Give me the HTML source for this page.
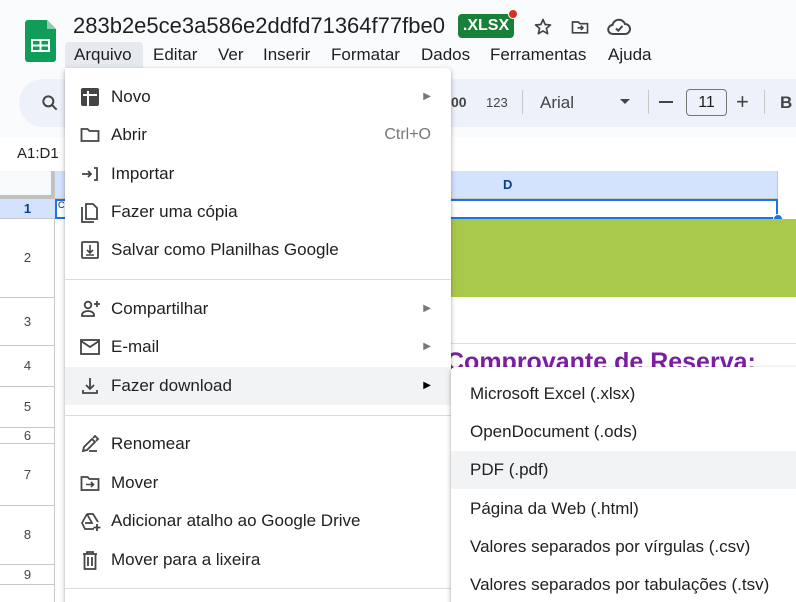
<!DOCTYPE html><html><head><meta charset="utf-8"><style>
*{box-sizing:border-box;margin:0;padding:0}
html,body{width:796px;height:602px;overflow:hidden}
body{position:relative;background:#f9fbfd;font-family:"Liberation Sans",Arial,sans-serif;color:#1f1f1f}
.abs{position:absolute}
.menu{position:absolute;background:#fff;box-shadow:0 2px 6px rgba(0,0,0,.25),0 1px 2px rgba(0,0,0,.15);border-radius:4px}
.it{position:absolute;left:0;right:0;height:38px;font-size:17px;line-height:38px;color:#202124}
.it .t{position:absolute;left:46px}
.it svg{position:absolute;left:15px;top:9px}
.arr{position:absolute;right:20px;top:0;font-size:10px;color:#777}
.div{position:absolute;left:0;right:0;height:1px;background:#dadce0}
.rh{position:absolute;left:0;width:55px;border-bottom:1px solid #c7c7c7;font-size:13px;color:#444;text-align:center}
</style></head><body>
<svg class="abs" style="left:25px;top:20px" width="31" height="42" viewBox="0 0 31 42"><path d="M3 0h19l9 9v30a3 3 0 0 1-3 3H3a3 3 0 0 1-3-3V3a3 3 0 0 1 3-3z" fill="#0f9d58"/><path d="M22 0v9h9z" fill="#87ceac"/><rect x="6" y="19" width="19" height="13" fill="#fff"/><rect x="8" y="21" width="6.5" height="3.5" fill="#0f9d58"/><rect x="16.5" y="21" width="6.5" height="3.5" fill="#0f9d58"/><rect x="8" y="26.5" width="6.5" height="3.5" fill="#0f9d58"/><rect x="16.5" y="26.5" width="6.5" height="3.5" fill="#0f9d58"/></svg>
<div class="abs" style="left:73px;top:13px;font-size:22px;color:#1f1f1f">283b2e5ce3a586e2ddfd71364f77fbe0</div>
<div class="abs" style="left:458px;top:14px;width:56px;height:24px;background:#188038;border-radius:4px;color:#fff;font-size:16px;font-weight:bold;line-height:24px;text-align:center">.XLSX</div>
<div class="abs" style="left:508px;top:9px;width:10px;height:10px;border-radius:50%;background:#d93025;border:1px solid #fff"></div>
<svg class="abs" style="left:533px;top:17px" width="20" height="20" viewBox="0 0 24 24"><path d="M12 3l2.6 6 6.4.5-4.9 4.2 1.5 6.3L12 16.7 6.4 20l1.5-6.3L3 9.5 9.4 9z" fill="none" stroke="#444" stroke-width="2" stroke-linejoin="round"/></svg>
<svg class="abs" style="left:570px;top:17px" width="20" height="20" viewBox="0 0 24 24"><path d="M3 6h7l2 2h9v11H3z" fill="none" stroke="#444" stroke-width="2"/><path d="M9 13h6m-2-2.5L15.5 13 13 15.5" fill="none" stroke="#444" stroke-width="2"/></svg>
<svg class="abs" style="left:607px;top:16px" width="24" height="22" viewBox="0 0 24 22"><path d="M6 18a4.5 4.5 0 0 1-.5-9A6.5 6.5 0 0 1 18 8a5 5 0 0 1 0 10z" fill="none" stroke="#444" stroke-width="2"/><path d="M9 12.5l2.2 2.2L15.5 10" fill="none" stroke="#444" stroke-width="2"/></svg>
<div class="abs" style="left:65px;top:42px;width:78px;height:27px;background:#e6e9ee;border-radius:4px 4px 0 0"></div>
<div class="abs" style="top:45px;font-size:17px;color:#1f1f1f;white-space:nowrap;left:0;width:796px">
<span class="abs" style="left:74px">Arquivo</span><span class="abs" style="left:153px">Editar</span><span class="abs" style="left:218px">Ver</span><span class="abs" style="left:263px">Inserir</span><span class="abs" style="left:331px">Formatar</span><span class="abs" style="left:421px">Dados</span><span class="abs" style="left:490px">Ferramentas</span><span class="abs" style="left:608px">Ajuda</span></div>
<div class="abs" style="left:19px;top:79px;width:800px;height:48px;background:#edf2fa;border-radius:24px"></div>
<svg class="abs" style="left:40px;top:93px" width="20" height="20" viewBox="0 0 24 24"><circle cx="10" cy="10" r="6" fill="none" stroke="#444" stroke-width="2.4"/><path d="M14.5 14.5L20 20" stroke="#444" stroke-width="2.4"/></svg>
<div class="abs" style="left:451px;top:94px;font-size:14px;font-weight:bold;color:#444">00</div>
<div class="abs" style="left:486px;top:95px;font-size:13px;color:#444">123</div>
<div class="abs" style="left:522px;top:90px;width:1px;height:24px;background:#c7c7c7"></div>
<div class="abs" style="left:540px;top:93px;font-size:17px;color:#444">Arial</div>
<div class="abs" style="left:620px;top:99px;border:5px solid transparent;border-top-color:#444"></div>
<div class="abs" style="left:648px;top:90px;width:1px;height:24px;background:#c7c7c7"></div>
<div class="abs" style="left:659px;top:101px;width:14px;height:2px;background:#444"></div>
<div class="abs" style="left:686px;top:89px;width:41px;height:27px;border:1px solid #747775;border-radius:4px;font-size:16px;text-align:center;line-height:25px;color:#1f1f1f">11</div>
<div class="abs" style="left:736px;top:89px;font-size:22px;color:#444">+</div>
<div class="abs" style="left:764px;top:90px;width:1px;height:24px;background:#c7c7c7"></div>
<div class="abs" style="left:780px;top:93px;font-size:17px;font-weight:bold;color:#444">B</div>
<div class="abs" style="left:0;top:137px;width:796px;height:34px;background:#fff"></div>
<div class="abs" style="left:17px;top:145px;font-size:15px;color:#1f1f1f">A1:D1</div>
<div class="abs" style="left:0;top:171px;width:796px;height:431px;background:#fff"></div>
<div class="abs" style="left:0;top:171px;width:55px;height:28px;background:#f8f9fa;border-right:4px solid #c0c0c0;border-bottom:4px solid #c0c0c0"></div>
<div class="abs" style="left:55px;top:171px;width:723px;height:28px;background:#d3e3fd;border-bottom:1px solid #c7c7c7;border-right:1px solid #c7c7c7"></div>
<div class="abs" style="left:503px;top:177px;font-size:13px;font-weight:bold;color:#0b3e8e">D</div>
<div class="abs" style="left:54px;top:171px;width:1px;height:431px;background:#c7c7c7"></div>
<div class="rh" style="top:199px;height:20px;background:#d3e3fd;line-height:19px;font-weight:bold;color:#0b3e8e">1</div>
<div class="rh" style="top:219px;height:79px;line-height:78px">2</div>
<div class="rh" style="top:298px;height:48px;line-height:47px">3</div>
<div class="rh" style="top:346px;height:41px;line-height:40px">4</div>
<div class="rh" style="top:387px;height:41px;line-height:40px">5</div>
<div class="rh" style="top:428px;height:16px;line-height:15px">6</div>
<div class="rh" style="top:444px;height:62px;line-height:61px">7</div>
<div class="rh" style="top:506px;height:59px;line-height:58px">8</div>
<div class="rh" style="top:565px;height:20px;line-height:19px">9</div>
<div class="abs" style="left:55px;top:199px;width:723px;height:20px;border:2px solid #1a73e8"></div>
<div class="abs" style="left:58px;top:200px;font-size:9px">C</div>
<div class="abs" style="left:773px;top:214px;width:10px;height:10px;border-radius:50%;background:#1a73e8;border:1px solid #fff"></div>
<div class="abs" style="left:451px;top:219px;width:345px;height:78px;background:#a9c94a"></div>
<div class="abs" style="left:451px;top:343px;width:345px;height:1px;background:#e0e0e0"></div>
<div class="abs" style="left:446px;top:348px;font-size:25px;font-weight:bold;color:#7b1fa2;white-space:nowrap">Comprovante de Reserva:</div>
<div class="menu" style="left:65px;top:68px;width:386px;height:545px;border-radius:0 4px 4px 4px">
<div class="it" style="top:10px"><svg width="20" height="20" viewBox="0 0 20 20"><rect x="1" y="1" width="18" height="18" rx="2" fill="#444"/><path d="M8 4v15M3 8h14" stroke="#fff" stroke-width="2"/></svg><span class="t">Novo</span><span class="arr">▶</span></div>
<div class="it" style="top:48px"><svg width="20" height="20" viewBox="0 0 20 20"><path d="M1.5 4h6l2 2h9v10h-17z" fill="none" stroke="#444" stroke-width="1.8"/></svg><span class="t">Abrir</span><span class="arr" style="font-size:16px;color:#777">Ctrl+O</span></div>
<div class="it" style="top:87px"><svg width="20" height="20" viewBox="0 0 20 20"><path d="M2 10h9m-3-3l3 3-3 3M14 4h3v12h-3" fill="none" stroke="#444" stroke-width="1.8"/></svg><span class="t">Importar</span></div>
<div class="it" style="top:125px"><svg width="20" height="22" viewBox="0 0 20 22"><path d="M2 5v15h12M6 2h7l4 4v11H6z" fill="none" stroke="#444" stroke-width="1.8"/></svg><span class="t">Fazer uma cópia</span></div>
<div class="it" style="top:163px"><svg width="20" height="20" viewBox="0 0 20 20"><rect x="2" y="2" width="16" height="16" rx="1" fill="none" stroke="#444" stroke-width="1.8"/><path d="M10 5v8m-3-3l3 3 3-3M6 15h8" fill="none" stroke="#444" stroke-width="1.6"/></svg><span class="t">Salvar como Planilhas Google</span></div>
<div class="div" style="top:211px"></div>
<div class="it" style="top:222px"><svg width="22" height="20" viewBox="0 0 22 20"><circle cx="8" cy="6" r="3.3" fill="none" stroke="#444" stroke-width="1.8"/><path d="M2 17v-1c0-2.5 3-4 6-4s6 1.5 6 4v1z" fill="none" stroke="#444" stroke-width="1.8"/><path d="M17 2v6M14 5h6" stroke="#444" stroke-width="1.8"/></svg><span class="t">Compartilhar</span><span class="arr">▶</span></div>
<div class="it" style="top:260px"><svg width="20" height="20" viewBox="0 0 20 20"><rect x="1" y="3" width="18" height="14" fill="none" stroke="#444" stroke-width="1.8"/><path d="M1 4l9 6 9-6" fill="none" stroke="#444" stroke-width="1.8"/></svg><span class="t">E-mail</span><span class="arr">▶</span></div>
<div class="it" style="top:299px;background:#f1f3f4"><svg width="20" height="20" viewBox="0 0 20 20"><path d="M10 2v11m-4-4l4 4 4-4M3 14v3h14v-3" fill="none" stroke="#444" stroke-width="1.8"/></svg><span class="t">Fazer download</span><span class="arr" style="color:#000">▶</span></div>
<div class="div" style="top:347px"></div>
<div class="it" style="top:357px"><svg width="20" height="20" viewBox="0 0 20 20"><path d="M3 17l1-4 8-8 3 3-8 8zM13 4l2-2 3 3-2 2M9 17h8" fill="none" stroke="#444" stroke-width="1.8"/></svg><span class="t">Renomear</span></div>
<div class="it" style="top:396px"><svg width="20" height="20" viewBox="0 0 20 20"><path d="M1.5 4h6l2 2h9v11h-17z" fill="none" stroke="#444" stroke-width="1.8"/><path d="M6 11.5h7m-2-2.5l2.5 2.5L11 14" fill="none" stroke="#444" stroke-width="1.6"/></svg><span class="t">Mover</span></div>
<div class="it" style="top:434px"><svg width="22" height="22" viewBox="0 0 22 22"><path d="M7 3h6l5 8M7 3L2 12l3 6h9M7 3l5 9H5" fill="none" stroke="#444" stroke-width="1.7"/><path d="M17 13v7M13.5 16.5h7" stroke="#444" stroke-width="1.8"/></svg><span class="t">Adicionar atalho ao Google Drive</span></div>
<div class="it" style="top:473px"><svg width="20" height="20" viewBox="0 0 20 20"><path d="M3 4h14M7 4V2h6v2M4.5 4v15h11V4M8 7v9M12 7v9" fill="none" stroke="#444" stroke-width="1.8"/></svg><span class="t">Mover para a lixeira</span></div>
<div class="div" style="top:520px"></div>
</div>
<div class="menu" style="left:451px;top:367px;width:360px;height:250px">
<div class="it" style="top:8px"><span class="t" style="left:19px">Microsoft Excel (.xlsx)</span></div>
<div class="it" style="top:46px"><span class="t" style="left:19px">OpenDocument (.ods)</span></div>
<div class="it" style="top:84px;background:#f1f3f4"><span class="t" style="left:19px">PDF (.pdf)</span></div>
<div class="it" style="top:123px"><span class="t" style="left:19px">Página da Web (.html)</span></div>
<div class="it" style="top:161px"><span class="t" style="left:19px">Valores separados por vírgulas (.csv)</span></div>
<div class="it" style="top:199px"><span class="t" style="left:19px">Valores separados por tabulações (.tsv)</span></div>
</div>
</body></html>
